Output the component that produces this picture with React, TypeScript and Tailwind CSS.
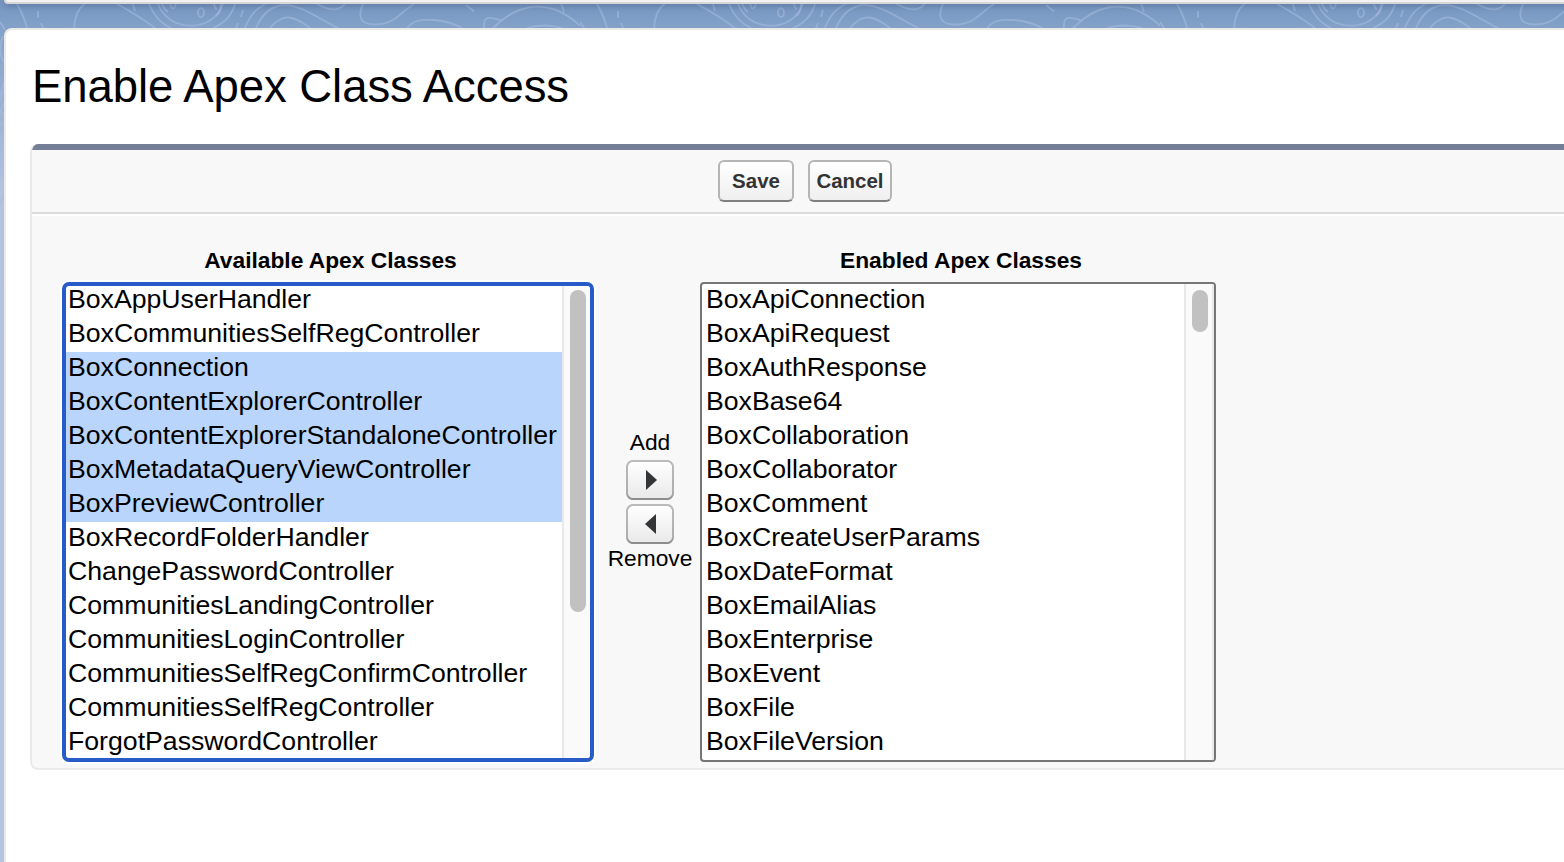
import { clsx } from "clsx";

const availableClasses = [
  "BoxAppUserHandler",
  "BoxCommunitiesSelfRegController",
  "BoxConnection",
  "BoxContentExplorerController",
  "BoxContentExplorerStandaloneController",
  "BoxMetadataQueryViewController",
  "BoxPreviewController",
  "BoxRecordFolderHandler",
  "ChangePasswordController",
  "CommunitiesLandingController",
  "CommunitiesLoginController",
  "CommunitiesSelfRegConfirmController",
  "CommunitiesSelfRegController",
  "ForgotPasswordController",
];

const selectedClasses = [
  "BoxConnection",
  "BoxContentExplorerController",
  "BoxContentExplorerStandaloneController",
  "BoxMetadataQueryViewController",
  "BoxPreviewController",
];

const enabledClasses = [
  "BoxApiConnection",
  "BoxApiRequest",
  "BoxAuthResponse",
  "BoxBase64",
  "BoxCollaboration",
  "BoxCollaborator",
  "BoxComment",
  "BoxCreateUserParams",
  "BoxDateFormat",
  "BoxEmailAlias",
  "BoxEnterprise",
  "BoxEvent",
  "BoxFile",
  "BoxFileVersion",
];

// Topographic contour lines, repeated every 580px across the page header.
function ContourBackdrop() {
  return (
    <svg className="absolute inset-0 h-full w-full" aria-hidden="true">
      <defs>
        <pattern id="contours" width="580" height="900" patternUnits="userSpaceOnUse">
          <g fill="none" stroke="#a3badd" strokeOpacity="0.6" strokeWidth="1.8">
            <path d="M17 4Q24 16 27 28M38 11V18M41 23L43 28M74 28C75 16 78 8 85 4" />
            <path d="M117 4C128 10 142 18 155 28M133 4L135 11" />
            <path d="M149 4C153 14 160 23 171 28M235 4C232 15 225 23 213 28" />
            <path d="M158 4C163 17 175 25.7 191 25.7S218 17 223 4M162 4C164 8 165 10 168 12" />
            <ellipse cx="201" cy="12.6" rx="3" ry="4.5" />
            <path d="M170 4Q173 13 176 4M214 4Q215 9 217 9M221 4C221 10 219 14 216 16" />
            <path d="M243 10L241 17M238 23L236 28" />
            <path d="M245 28C250 15 257 7 268 3M256 28C262 14 272 5 286 5C302 6 318 18 338 28" />
            <path d="M270 28C277 20 283 17 289 17.5C297 18 303 23 310 28" />
            <path d="M315 3C322 7 330 9.5 335 9.3S343 6 345 4" />
            <path d="M363 4C357 17 361 24 373 24.5C396 25 400 12 414 4" />
            <path d="M407 28C413 21 419 19 434 20C446 21 455 24 462 28M466 5L474 11.5" />
            <path d="M484 28C483 16 488 16 503 21M493 28C502 19 515 10 528 7.5C547 4 563 10 583 28" />
            <path d="M527 28Q545 23 562 28M561 3L564 12" />
            <path d="M-2 20C1 23 3 26 5 30M3 36Q-3 52 4 62M5 80L-1 98M5 88L0 101M5 101L0 112" />
            <path d="M-1 113L5 114M-1 123L5 125M-1 136L5 139M-1 149L5 149M-1 158L5 158M-1 167L5 165M-1 176L5 172M0 205L5 192" />
          </g>
        </pattern>
      </defs>
      <rect width="100%" height="100%" fill="url(#contours)" />
    </svg>
  );
}

function ClassList({
  title,
  items,
  selected = [],
  focused = false,
}: {
  title: string;
  items: string[];
  selected?: string[];
  focused?: boolean;
}) {
  return (
    <section className={clsx("flex flex-col", focused ? "w-[532px]" : "w-[516px]")}>
      <h2
        className={clsx(
          "h-[38px] text-center text-[22.75px] leading-[32px] font-bold",
          focused ? "pl-[5px]" : "pl-[6px]",
        )}
      >
        {title}
      </h2>
      <div
        className={clsx(
          "flex h-[480px] overflow-hidden bg-white",
          focused
            ? "rounded-[7px] border-4 border-[#265bc8] shadow-[0_0_0_2px_#ffffff]"
            : "rounded-[4px] border-2 border-[#767676]",
        )}
      >
        <ul className={clsx("min-w-0 flex-1", focused && "-mt-[2px]")}>
          {items.map((name) => (
            <li
              key={name}
              className={clsx(
                "h-[34px] text-[26.67px] leading-[31px] whitespace-nowrap",
                focused ? "pl-[2px]" : "pl-[4px]",
                selected.includes(name) && "bg-[#b9d5fb]",
              )}
            >
              {name}
            </li>
          ))}
        </ul>
        <div
          className={clsx(
            "flex shrink-0 border-l-2 border-[#e8e8e8] bg-[#fafafa] pl-[6px]",
            focused ? "w-[28px] pt-[4px]" : "w-[30px] border-r-2 pt-[6px]",
          )}
        >
          <div
            className={clsx("w-4 rounded-full bg-[#c1c1c1]", focused ? "h-[322px]" : "h-[42px]")}
          />
        </div>
      </div>
    </section>
  );
}

function ActionButton({ label, className }: { label: string; className: string }) {
  return (
    <button
      className={clsx(
        "h-[42px] rounded-[6px] border-2 border-[#b5b5b5] border-b-[#7f7f7f] bg-linear-to-b from-white to-[#efefef] text-[20.475px] leading-[38px] font-bold text-[#333333]",
        className,
      )}
    >
      {label}
    </button>
  );
}

function ArrowButton({ direction }: { direction: "left" | "right" }) {
  return (
    <button aria-label={direction === "right" ? "Add" : "Remove"} className="h-10 w-12">
      <svg width="48" height="40" viewBox="0 0 48 40">
        <defs>
          <linearGradient id={`face-${direction}`} x2="0" y2="1">
            <stop stopColor="#ffffff" />
            <stop offset="1" stopColor="#e9e9e9" />
          </linearGradient>
          <linearGradient id={`edge-${direction}`} x2="0" y2="1">
            <stop stopColor="#bbbbbb" />
            <stop offset="0.85" stopColor="#adadad" />
            <stop offset="1" stopColor="#8c8c8c" />
          </linearGradient>
        </defs>
        <path
          d="M5.5 1H42.5Q43.5 4.500 47 5.500V34.500Q43.500 35.500 42.500 39H5.500Q4.500 35.500 1 34.500V5.500Q4.500 4.500 5.500 1Z"
          fill="#f8f8f8"
        />
        <path
          d="M6 1H42Q46 2 47 6V34Q46 38 42 39H6Q2 38 1 34V6Q2 2 6 1Z"
          fill={`url(#face-${direction})`}
          stroke={`url(#edge-${direction})`}
          strokeWidth="2"
          strokeLinejoin="round"
        />
        <path d={direction === "right" ? "M20 10L31 20L20 30Z" : "M30 10L19 20L30 30Z"} fill="#333537" />
      </svg>
    </button>
  );
}

export default function App() {
  return (
    <div className="relative flex h-[862px] w-full flex-col overflow-hidden bg-[linear-gradient(180deg,#7696c1_0px,#84a2c9_30px,#b3c2df_190px,#b4c3df_100%)] pl-1 font-['Liberation_Sans',Arial,sans-serif] text-black">
      <ContourBackdrop />
      <div className="relative -mr-3 h-1 shrink-0 rounded-bl-[6px] border-b-2 border-l-2 border-[#d8d7d5] bg-[#f2f2f2] shadow-[0_1px_7px_rgba(40,65,100,0.55)]" />
      <main className="relative mt-6 -mr-3 flex flex-1 flex-col rounded-tl-[8px] border-t-2 border-l-2 border-[#ebeae8] bg-white pl-6">
        <h1 className="h-[114px] pl-[2px] text-[45.5px] leading-[114px] tracking-[-0.07px] whitespace-nowrap">
          Enable Apex Class Access
        </h1>
        <div className="h-[626px] overflow-hidden rounded-l-[8px] border-b-2 border-l-2 border-[#eaeaea] bg-[#f8f8f8]">
          <div className="h-[6px] bg-[#747e96]" />
          <div className="flex h-[64px] gap-[14px] border-b-2 border-[#dbdbdb] pt-[10px] pl-[686px]">
            <ActionButton label="Save" className="w-[76px]" />
            <ActionButton label="Cancel" className="w-[84px]" />
          </div>
          <div className="flex border-t-2 border-white pt-[28px] pl-[30px]">
            <ClassList title="Available Apex Classes" items={availableClasses} selected={selectedClasses} focused />
            <div className="mr-2 ml-[14px] flex w-[84px] flex-col items-center pt-[184px] text-[22.75px] leading-[28px] whitespace-nowrap">
              <span className="h-[32px]">Add</span>
              <div className="flex flex-col gap-1">
                <ArrowButton direction="right" />
                <ArrowButton direction="left" />
              </div>
              <span>Remove</span>
            </div>
            <ClassList title="Enabled Apex Classes" items={enabledClasses} />
          </div>
        </div>
      </main>
    </div>
  );
}
